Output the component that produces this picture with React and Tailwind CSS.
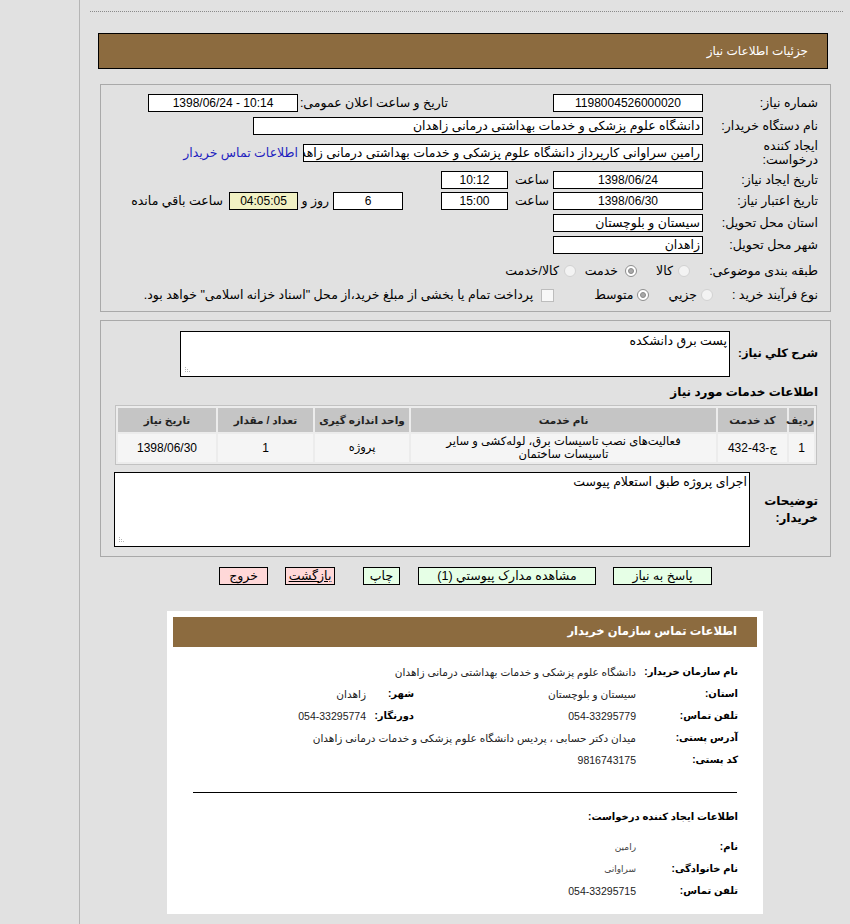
import React from "react";

function Box({ className = "", center = true, children }) {
  return (
    <div
      className={`h-[18px] shrink-0 bg-white border border-black flex items-center overflow-hidden whitespace-nowrap px-[2px] text-[12px] ${center ? "justify-center" : "justify-start"} ${className}`}
    >
      {children}
    </div>
  );
}

function Radio({ checked = false, className = "" }) {
  return checked ? (
    <span className={`w-[12px] h-[12px] shrink-0 rounded-full border border-[#8e8e8e] bg-white flex items-center justify-center ${className}`}>
      <span className="w-[6px] h-[6px] rounded-full bg-[#a8a8a8] border border-[#8a8a8a]" />
    </span>
  ) : (
    <span className={`w-[12px] h-[12px] shrink-0 rounded-full border border-[#d2d2d2] bg-[#f3f3f3] ${className}`} />
  );
}

function Grip() {
  return (
    <svg className="absolute left-[3px] bottom-[3px]" width="8" height="8" viewBox="0 0 8 8">
      <g fill="#b8b8b8">
        <rect x="1" y="6" width="1" height="1" />
        <rect x="3" y="6" width="1" height="1" />
        <rect x="5" y="6" width="1" height="1" />
        <rect x="1" y="4" width="1" height="1" />
        <rect x="3" y="4" width="1" height="1" />
        <rect x="1" y="2" width="1" height="1" />
      </g>
    </svg>
  );
}

function InfoRow({ label, value, label2, value2, small = false }) {
  return (
    <div className="flex items-center h-[22px] whitespace-nowrap">
      <div className="w-[102px] shrink-0 font-bold text-[10px]">{label}</div>
      <div className={`w-[222px] shrink-0 ${small ? "text-[9px] text-[#444]" : "text-[10.5px] text-[#222]"}`}>{value}</div>
      {label2 && <div className="w-[46px] shrink-0 font-bold text-[10px]">{label2}</div>}
      {value2 && <div className="mr-[2px] text-[10.5px] text-[#222]">{value2}</div>}
    </div>
  );
}

export default function App() {
  return (
    <div className="w-[850px] h-[924px] overflow-hidden bg-[#e1e1e1] flex font-[Tahoma,'Liberation_Sans','DejaVu_Sans',sans-serif] text-[12px] text-black leading-none">
      <div className="w-[80px] shrink-0 h-full border-r border-[#b5b5b5]" />
      <div className="flex-1 flex flex-col">
        <div className="mt-[11px] ml-[10px] mr-[7px] border-t border-dotted border-[#8a8a8a]" />

        <div dir="rtl" className="mt-[21px] ml-[18px] w-[730px] h-[36px] bg-[#8c6b3f] border border-black flex items-center justify-start pr-[19px] text-white">
          جزئیات اطلاعات نیاز
        </div>

        {/* Panel 1 */}
        <div dir="rtl" className="mt-[15px] ml-[20px] w-[731px] h-[228px] shrink-0 border border-[#a9a9a9] pr-[12px] pt-[9px] text-[12.5px] whitespace-nowrap">
          <div className="flex items-center h-[18px]">
            <div className="w-[115px] shrink-0">شماره نیاز:</div>
            <Box className="w-[150px]">1198004526000020</Box>
            <div className="w-[150px] shrink-0 mr-[105px]">تاریخ و ساعت اعلان عمومی:</div>
            <Box className="w-[150px]"><span dir="ltr">1398/06/24 - 10:14</span></Box>
          </div>
          <div className="flex items-center h-[18px] mt-[5px]">
            <div className="w-[115px] shrink-0">نام دستگاه خریدار:</div>
            <Box className="w-[450px] !text-[12.5px]" center={false}>دانشگاه علوم پزشکی و خدمات بهداشتی درمانی زاهدان</Box>
          </div>
          <div className="flex items-center h-[30px] mt-[3px]">
            <div className="w-[115px] shrink-0 leading-[14px]">ایجاد کننده<br />درخواست:</div>
            <Box className="w-[400px] !text-[12.5px]" center={false}>رامین سراوانی کارپرداز دانشگاه علوم پزشکی و خدمات بهداشتی درمانی زاهدان</Box>
            <div className="mr-[5px] text-[#1f1fbf]">اطلاعات تماس خریدار</div>
          </div>
          <div className="flex items-center h-[18px] mt-[3px]">
            <div className="w-[115px] shrink-0">تاریخ ایجاد نیاز:</div>
            <Box className="w-[150px]">1398/06/24</Box>
            <div className="w-[45px] shrink-0 pr-[4px]">ساعت</div>
            <Box className="w-[67px]">10:12</Box>
          </div>
          <div className="flex items-center h-[18px] mt-[3px]">
            <div className="w-[115px] shrink-0">تاریخ اعتبار نیاز:</div>
            <Box className="w-[150px]">1398/06/30</Box>
            <div className="w-[45px] shrink-0 pr-[4px]">ساعت</div>
            <Box className="w-[67px]">15:00</Box>
            <Box className="w-[70px] mr-[38px]">6</Box>
            <div className="w-[35px] shrink-0 pr-[4px]">روز و</div>
            <Box className="w-[69px] !bg-[#f1f1c4]">04:05:05</Box>
            <div className="mr-[6px]">ساعت باقي مانده</div>
          </div>
          <div className="flex items-center h-[18px] mt-[4px]">
            <div className="w-[115px] shrink-0">استان محل تحویل:</div>
            <Box className="w-[150px] !text-[12.5px]" center={false}>سیستان و بلوچستان</Box>
          </div>
          <div className="flex items-center h-[18px] mt-[4px]">
            <div className="w-[115px] shrink-0">شهر محل تحویل:</div>
            <Box className="w-[150px] !text-[12.5px]" center={false}>زاهدان</Box>
          </div>
          <div className="flex items-center h-[18px] mt-[8px]">
            <div className="w-[115px] shrink-0">طبقه بندی موضوعی:</div>
            <Radio className="mr-[13px]" />
            <span className="mr-[5px]">کالا</span>
            <Radio checked className="mr-[19px]" />
            <span className="mr-[7px]">خدمت</span>
            <Radio className="mr-[9px]" />
            <span className="mr-[5px]">کالا/خدمت</span>
          </div>
          <div className="flex items-center h-[18px] mt-[6px]">
            <div className="w-[105px] shrink-0">نوع فرآیند خرید :</div>
            <Radio />
            <span className="mr-[4px]">جزيي</span>
            <Radio checked className="mr-[19px]" />
            <span className="mr-[4px]">متوسط</span>
            <span className="w-[13px] h-[13px] shrink-0 bg-[#f8f8f8] border border-[#bdbdbd] mr-[40px]" />
            <span className="mr-[8px]">پرداخت تمام یا بخشی از مبلغ خرید،از محل "اسناد خزانه اسلامی" خواهد بود.</span>
          </div>
        </div>

        {/* Panel 2 */}
        <div dir="rtl" className="mt-[8px] ml-[20px] w-[731px] h-[237px] shrink-0 border border-[#a9a9a9] pr-[12px] pt-[10px]">
          <div className="flex items-center h-[46px]">
            <div className="w-[88px] shrink-0 font-bold text-[11.5px] whitespace-nowrap">شرح کلي نیاز:</div>
            <div className="relative w-[550px] h-[46px] bg-white border border-black pr-[2px] pt-[3px] text-[12.5px]">
              پست برق دانشکده
              <Grip />
            </div>
          </div>
          <div className="mt-[7px] h-[16px] flex items-center font-bold text-[12px] whitespace-nowrap">اطلاعات خدمات مورد نیاز</div>
          <table className="mt-[5px] mr-[1px] w-[702px] table-fixed border-separate border-spacing-[2px] border border-[#c2c2c2] bg-[#ececec] text-[12px]">
            <colgroup>
              <col className="w-[25px]" />
              <col className="w-[69px]" />
              <col className="w-[305px]" />
              <col className="w-[94px]" />
              <col className="w-[95px]" />
              <col className="w-[98px]" />
            </colgroup>
            <thead>
              <tr className="h-[24px] bg-[#c5c5c5] text-[#222] text-[10.5px] whitespace-nowrap">
                <th className="font-bold">ردیف</th>
                <th className="font-bold">کد خدمت</th>
                <th className="font-bold">نام خدمت</th>
                <th className="font-bold">واحد اندازه گیری</th>
                <th className="font-bold">تعداد / مقدار</th>
                <th className="font-bold">تاریخ نیاز</th>
              </tr>
            </thead>
            <tbody>
              <tr className="h-[28px] bg-[#f5f5f5] text-center">
                <td>1</td>
                <td>ج-43-432</td>
                <td className="leading-[13px] text-[11.5px]">فعالیت‌های نصب تاسیسات برق، لوله‌کشی و سایر<br />تاسیسات ساختمان</td>
                <td className="text-[11.5px]">پروژه</td>
                <td>1</td>
                <td>1398/06/30</td>
              </tr>
            </tbody>
          </table>
          <div className="flex items-center mt-[7px] h-[75px]">
            <div className="w-[68px] shrink-0 font-bold text-[12px] leading-[17px]">توضیحات<br />خریدار:</div>
            <div className="relative w-[636px] h-[75px] bg-white border border-black pr-[2px] pt-[3px] text-[12.5px]">
              اجرای پروژه طبق استعلام پیوست
              <Grip />
            </div>
          </div>
        </div>

        {/* Buttons */}
        <div dir="rtl" className="mt-[10px] flex items-center pr-[138px] h-[18px] text-[12.5px] whitespace-nowrap">
          <div className="w-[99px] h-[18px] border border-black bg-[#e6ffe6] flex items-center justify-center">پاسخ به نیاز</div>
          <div className="w-[178px] h-[18px] mr-[17px] border border-black bg-[#e6ffe6] flex items-center justify-center">مشاهده مدارک پیوستي (1)</div>
          <div className="w-[37px] h-[18px] mr-[18px] border border-black bg-[#e6ffe6] flex items-center justify-center">چاپ</div>
          <div className="w-[50px] h-[18px] mr-[28px] border border-black bg-[#ffd8d8] flex items-center justify-center underline">بازگشت</div>
          <div className="w-[49px] h-[18px] mr-[17px] border border-black bg-[#ffd8d8] flex items-center justify-center">خروج</div>
        </div>

        {/* White contact box */}
        <div dir="rtl" className="mt-[26px] ml-[87px] w-[596px] h-[303px] shrink-0 bg-white p-[6px]">
          <div className="h-[30px] bg-[#8c6b3f] flex items-center pr-[20px] text-white font-bold text-[11.5px]">
            اطلاعات تماس سازمان خریدار
          </div>
          <div className="pr-[19px] mt-[14px]">
            <InfoRow label="نام سازمان خریدار:" value="دانشگاه علوم پزشکی و خدمات بهداشتی درمانی زاهدان" />
            <InfoRow label="استان:" value="سیستان و بلوچستان" label2="شهر:" value2="زاهدان" />
            <InfoRow label="تلفن تماس:" value="054-33295779" label2="دورنگار:" value2="054-33295774" />
            <div className="flex items-center h-[22px] whitespace-nowrap">
              <div className="w-[102px] shrink-0 font-bold text-[10px]">آدرس پستی:</div>
              <div className="text-[10.5px] text-[#222]">میدان دکتر حسابی ، پردیس دانشگاه علوم پزشکی و خدمات درمانی زاهدان</div>
            </div>
            <InfoRow label="کد پستی:" value="9816743175" />
          </div>
          <div className="mt-[21px] mx-[20px] border-t border-black" />
          <div className="pr-[19px] mt-[13px] h-[22px] flex items-center font-bold text-[10px]">اطلاعات ایجاد کننده درخواست:</div>
          <div className="pr-[19px] mt-[8px]">
            <InfoRow label="نام:" value="رامین" small />
            <InfoRow label="نام خانوادگی:" value="سراوانی" small />
            <InfoRow label="تلفن تماس:" value="054-33295715" />
          </div>
        </div>
      </div>
    </div>
  );
}
